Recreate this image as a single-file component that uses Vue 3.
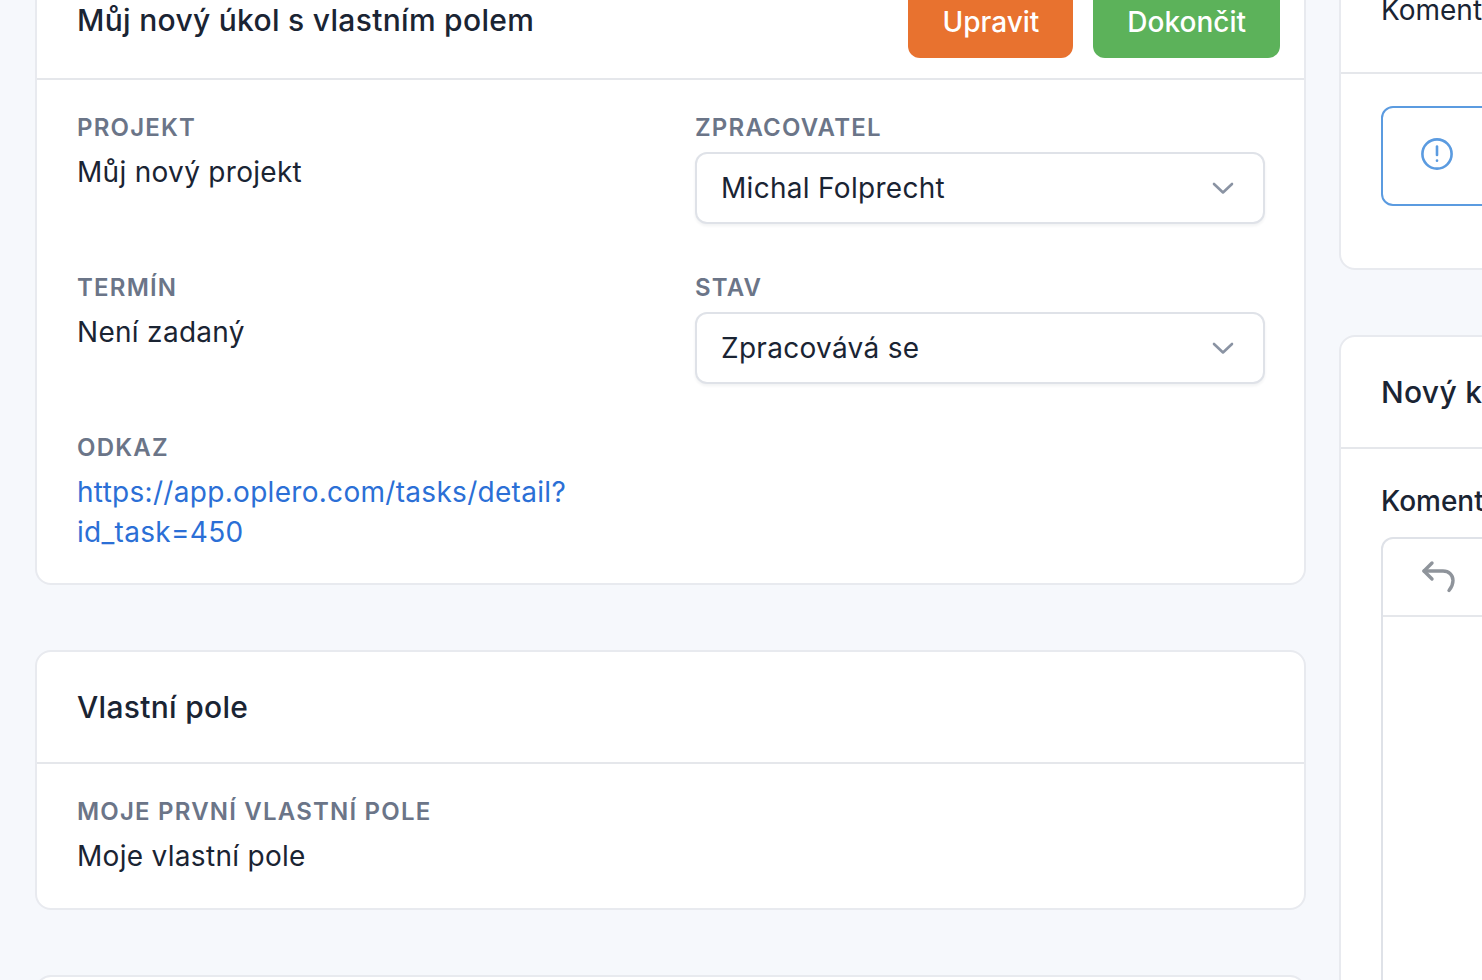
<script setup>
const details = [
  { label: 'PROJEKT', value: 'Můj nový projekt' },
  { label: 'ZPRACOVATEL', select: 'Michal Folprecht' },
  { label: 'TERMÍN', value: 'Není zadaný' },
  { label: 'STAV', select: 'Zpracovává se' },
  { label: 'ODKAZ', link: 'https://app.oplero.com/tasks/detail?id_task=450' },
]
</script>

<template>
  <div class="page">
    <main class="left">
      <section class="card first">
        <header class="head head-task">
          <h1 class="title">Můj nový úkol s vlastním polem</h1>
          <div class="actions">
            <button class="btn orange">Upravit</button>
            <button class="btn green">Dokončit</button>
          </div>
        </header>
        <div class="grid">
          <div v-for="d in details" :key="d.label" class="field">
            <div class="label">{{ d.label }}</div>
            <div v-if="d.value" class="value">{{ d.value }}</div>
            <a v-else-if="d.link" class="link">https://app.oplero.com/tasks/detail?<br>id_task=450</a>
            <div v-else class="select">
              <span>{{ d.select }}</span>
              <svg width="24" height="24" viewBox="0 0 24 24" fill="none" stroke="#8a93a3" stroke-width="2.6" stroke-linecap="round" stroke-linejoin="round"><path d="M3 8l9 8.5L21 8" /></svg>
            </div>
          </div>
        </div>
      </section>

      <section class="card">
        <header class="head"><h2 class="title">Vlastní pole</h2></header>
        <div class="single">
          <div class="label">MOJE PRVNÍ VLASTNÍ POLE</div>
          <div class="value">Moje vlastní pole</div>
        </div>
      </section>

      <section class="card stub"></section>
    </main>

    <aside class="right">
      <section class="card side-top">
        <div class="side-head"><span class="side-text">Komentáře</span></div>
        <div class="side-body">
          <div class="notice">
            <svg width="36" height="36" viewBox="0 0 36 36" fill="none" stroke="#5b9be0" stroke-width="2.6" stroke-linecap="round"><circle cx="18" cy="18" r="14.6" /><path d="M18 10.5v8.5" /><path d="M18 24.6v.2" /></svg>
          </div>
        </div>
      </section>

      <section class="card side-new">
        <header class="head"><h2 class="title">Nový komentář</h2></header>
        <div class="side-form">
          <div class="form-label">Komentář</div>
          <div class="editor">
            <div class="toolbar">
              <svg width="36" height="36" viewBox="0 0 36 36" fill="none" stroke="#8f949b" stroke-width="3.4" stroke-linecap="round" stroke-linejoin="round"><path d="M11 4L3 12l8 8" /><path d="M3 12h19c6 0 10 4 10 9.500 0 4-1.500 7-4 10" /></svg>
            </div>
          </div>
        </div>
      </section>
    </aside>
  </div>
</template>

<style>
html, body { margin: 0; padding: 0; background: #f6f8fc; overflow: hidden; }
</style>

<style scoped>
.page {
  height: 980px;
  overflow: hidden;
  display: flex;
  align-items: flex-start;
  gap: 33px;
  padding-left: 35px;
  background: #f6f8fc;
  font-family: Inter, "Liberation Sans", sans-serif;
  color: #1a2433;
  box-sizing: border-box;
}
.left {
  width: 1271px;
  flex: none;
  display: flex;
  flex-direction: column;
  gap: 65px;
  margin-top: -40px;
}
.right {
  width: 600px;
  flex: none;
  display: flex;
  flex-direction: column;
  gap: 65px;
  margin-top: -60px;
}
.card {
  background: #fff;
  border: 2px solid #e8eaef;
  border-radius: 16px;
  box-sizing: border-box;
}
.first { height: 625px; }
.head {
  display: flex;
  align-items: center;
  justify-content: space-between;
  padding: 0 40px;
  height: 112px;
  border-bottom: 2px solid #e5e7eb;
  box-sizing: border-box;
}
.head-task { height: 118px; padding-right: 24px; }
.title { margin: 0; font-size: 30px; font-weight: 500; letter-spacing: 0.3px; line-height: 40px; }
.head-task .title { position: relative; }
.actions { display: flex; gap: 20px; align-self: flex-start; }
.btn {
  height: 96px;
  margin-top: 0;
  padding: 0 34px;
  border: 0;
  border-radius: 12px;
  color: #fff;
  font: 500 28px/40px Inter, "Liberation Sans", sans-serif;
  display: flex;
  align-items: center;
  padding-top: 24px;
  box-sizing: border-box;
}
.orange { background: #e8722f; }
.green { background: #5cb25a; }
.grid {
  display: grid;
  grid-template-columns: 618px 570px;
  grid-auto-rows: 160px;
  padding: 32px 0 0 40px;
}
.label {
  font-size: 24px;
  line-height: 32px;
  font-weight: 600;
  letter-spacing: 1.2px;
  color: #6b7588;
}
.value { margin-top: 8px; font-size: 28px; line-height: 40px; letter-spacing: 0.3px; }
.link { display: block; margin-top: 8px; font-size: 28px; line-height: 40px; letter-spacing: 0.3px; color: #2b6fd6; }
.select {
  margin-top: 8px;
  height: 72px;
  border: 2px solid #dfe2e8;
  border-radius: 12px;
  box-shadow: 0 2px 3px rgba(20, 30, 50, 0.06);
  display: flex;
  align-items: center;
  justify-content: space-between;
  padding: 0 28px 0 24px;
  font-size: 28px;
  letter-spacing: 0.3px;
  box-sizing: border-box;
  background: #fff;
}
.single { padding: 32px 40px 32px; }
.stub { height: 300px; }
.side-top { height: 330px; }
.side-head { height: 132px; padding: 48px 40px 0; border-bottom: 2px solid #e5e7eb; box-sizing: border-box; }
.side-text { font-size: 28px; line-height: 40px; }
.side-body { padding: 32px 40px; }
.notice {
  height: 100px;
  width: 600px;
  border: 2px solid #5b9be0;
  border-radius: 12px;
  padding: 28px 36px;
  box-sizing: border-box;
}
.side-new { height: 900px; }
.side-form { padding: 32px 40px; }
.form-label { font-size: 28px; line-height: 40px; font-weight: 500; }
.editor { margin-top: 16px; height: 600px; border: 2px solid #dfe2e8; border-radius: 12px; }
.toolbar { height: 78px; padding: 20px 38px; border-bottom: 2px solid #e5e7eb; box-sizing: border-box; }
</style>
